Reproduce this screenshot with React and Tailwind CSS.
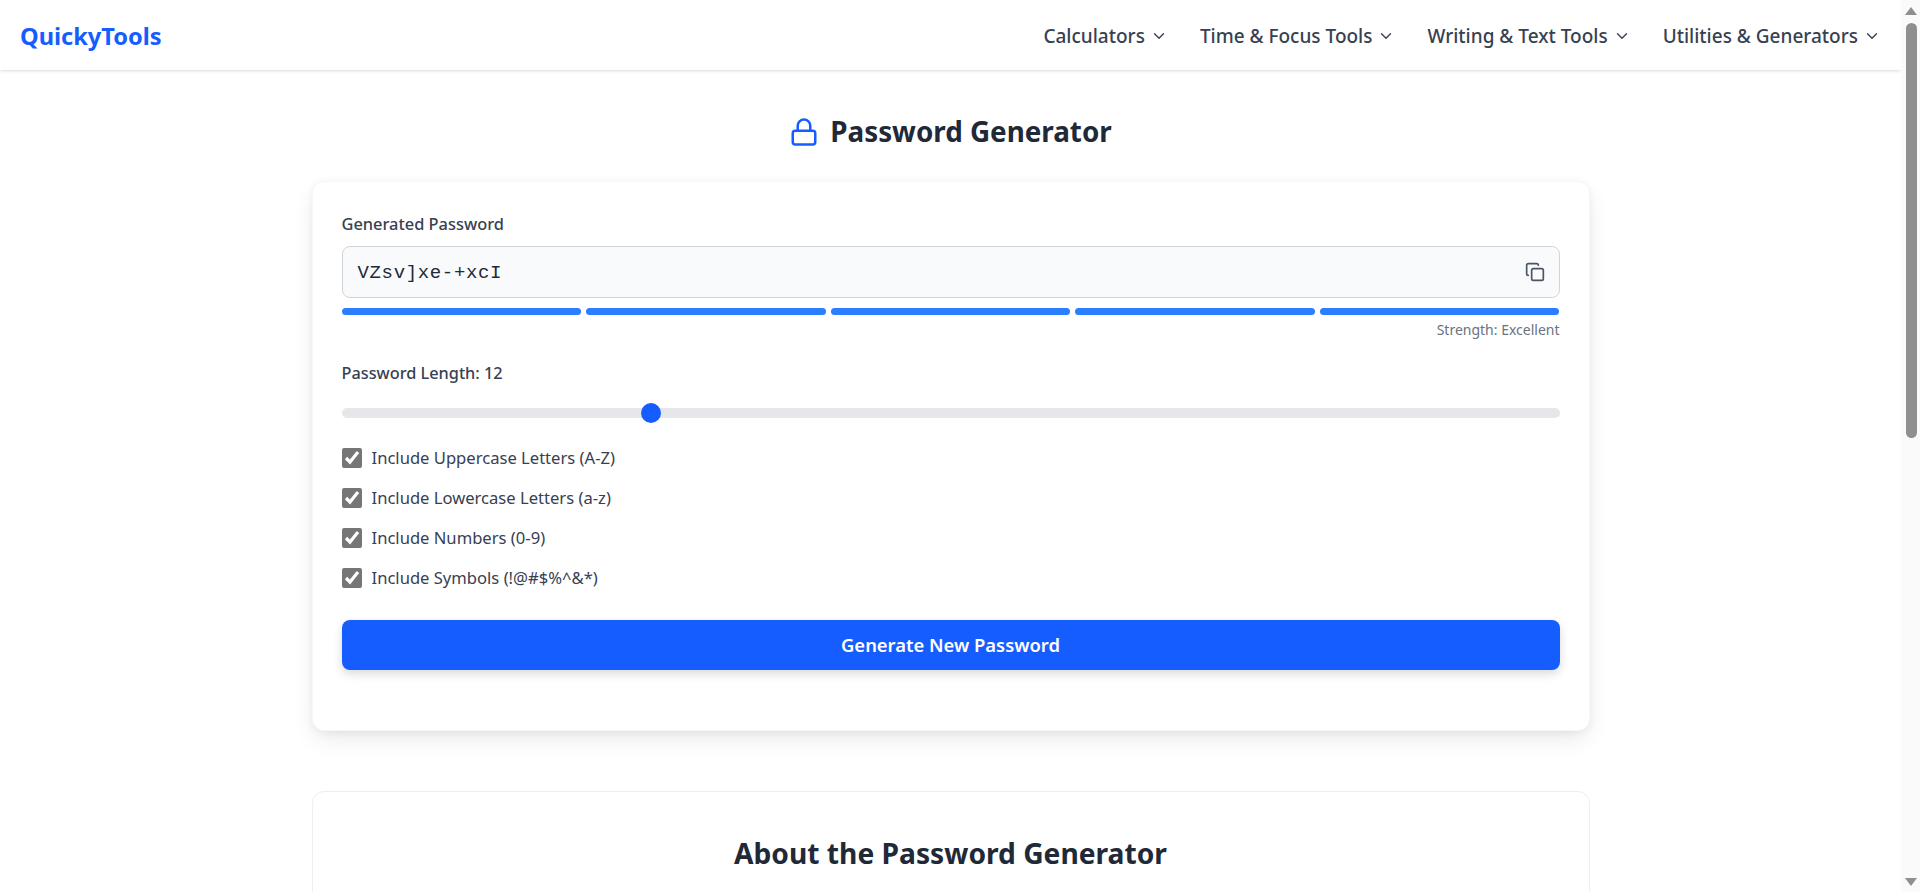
import React, { useState } from "react";
import { ChevronDown, Copy, Lock } from "lucide-react";

const navItems = ["Calculators", "Time & Focus Tools", "Writing & Text Tools", "Utilities & Generators"];
const options = [
  "Include Uppercase Letters (A-Z)",
  "Include Lowercase Letters (a-z)",
  "Include Numbers (0-9)",
  "Include Symbols (!@#$%^&*)",
];

const Navbar = () => (
  <header className="flex h-[70px] shrink-0 items-center justify-between bg-white pt-[2px] pr-[20px] pl-5 shadow-[0_1px_3px_rgba(0,0,0,0.15)]">
    <span className="pt-[2px] text-[23.6px] font-bold text-[#165dff]">QuickyTools</span>
    <nav className="flex items-center gap-[32px]">
      {navItems.map((label) => (
        <span key={label} className="flex items-center gap-[5px] text-[19px] font-medium text-[#374151]">
          {label}
          <ChevronDown size={18} strokeWidth={1.8} />
        </span>
      ))}
    </nav>
  </header>
);

const Scrollbar = () => (
  <div className="flex h-full w-[19px] shrink-0 flex-col items-center bg-[#fafafa] pl-[1px]">
    <div className="mt-[7px] h-0 w-0 border-x-[6px] border-b-[8px] border-x-transparent border-b-[#8f8f8f]" />
    <div className="mt-[8px] h-[415px] w-[11px] rounded-full bg-[#8f8f8f]" />
    <div className="mt-auto mb-[6px] h-0 w-0 border-x-[6px] border-t-[8px] border-x-transparent border-t-[#8f8f8f]" />
  </div>
);

const App = () => {
  const [length, setLength] = useState(12);

  return (
    <div className="flex h-screen overflow-hidden bg-white font-['Noto_Sans',sans-serif] text-[#1f2937]">
      <div className="flex min-w-0 flex-1 flex-col overflow-hidden">
        <Navbar />
        <main className="flex flex-col items-center">
          <h1 className="mt-[41px] flex h-[42px] items-center gap-[11px] text-[27.8px] font-bold">
            <Lock size={30} className="text-[#165dff]" />
            Password Generator
          </h1>

          <section className="mt-[28px] w-[1278px] rounded-xl border border-[#f7f7f7] bg-white px-[29px] pt-[29px] pb-[60px] shadow-[0_10px_25px_-4px_rgba(0,0,0,0.1),0_2px_8px_rgba(0,0,0,0.05)]">
            <label className="block text-[16.4px] font-medium leading-[26px] text-[#374151]">Generated Password</label>
            <div className="mt-[9px] flex h-[52px] items-center justify-between rounded-lg border border-[#d1d5db] bg-[#f9fafb] pr-[14px] pl-[15px]">
              <span className="pt-[3px] font-['Liberation_Mono',monospace] text-[19px] tracking-[0.65px] text-[#1f2937]">VZsv]xe-+xcI</span>
              <Copy size={20} className="text-[#4b5563]" />
            </div>
            <div className="mt-[10px] flex gap-[5px]">
              {[0, 1, 2, 3, 4].map((i) => (
                <div key={i} className="h-[7px] flex-1 rounded-full bg-[#2b7fff]" />
              ))}
            </div>
            <p className="mt-[6px] text-right text-[14px] leading-[18px] text-[#6b7280]">Strength: Excellent</p>

            <label className="mt-[21px] block text-[16.3px] font-medium leading-[26px] text-[#374151]">Password Length: {length}</label>
            <input
              type="range"
              min="8"
              max="24"
              value={length}
              onChange={(e) => setLength(Number(e.target.value))}
              className="mt-[22px] block h-[10px] w-full appearance-none rounded-full bg-[#e5e7eb] [&::-webkit-slider-thumb]:h-[20px] [&::-webkit-slider-thumb]:w-[20px] [&::-webkit-slider-thumb]:appearance-none [&::-webkit-slider-thumb]:rounded-full [&::-webkit-slider-thumb]:bg-[#165dff]"
            />

            <div className="mt-[30px] flex flex-col gap-[20px]">
              {options.map((label) => (
                <label key={label} className="flex h-[20px] items-center gap-[10px] text-[16.6px] text-[#374151]">
                  <input type="checkbox" defaultChecked className="m-0 h-5 w-5 accent-[#767676]" />
                  {label}
                </label>
              ))}
            </div>

            <button className="mt-[32px] block h-[50px] w-full rounded-lg bg-[#165dff] text-[18.4px] font-semibold text-white shadow-[0_4px_10px_rgba(0,0,0,0.15)]">
              Generate New Password
            </button>
          </section>

          <section className="mt-[60px] w-[1278px] rounded-xl border border-[#eeeeee] bg-white px-[30px] pt-[40px] pb-[40px]">
            <h2 className="text-center text-[28.2px] font-bold leading-[42px]">About the Password Generator</h2>
          </section>
        </main>
      </div>
      <Scrollbar />
    </div>
  );
};

export default App;
